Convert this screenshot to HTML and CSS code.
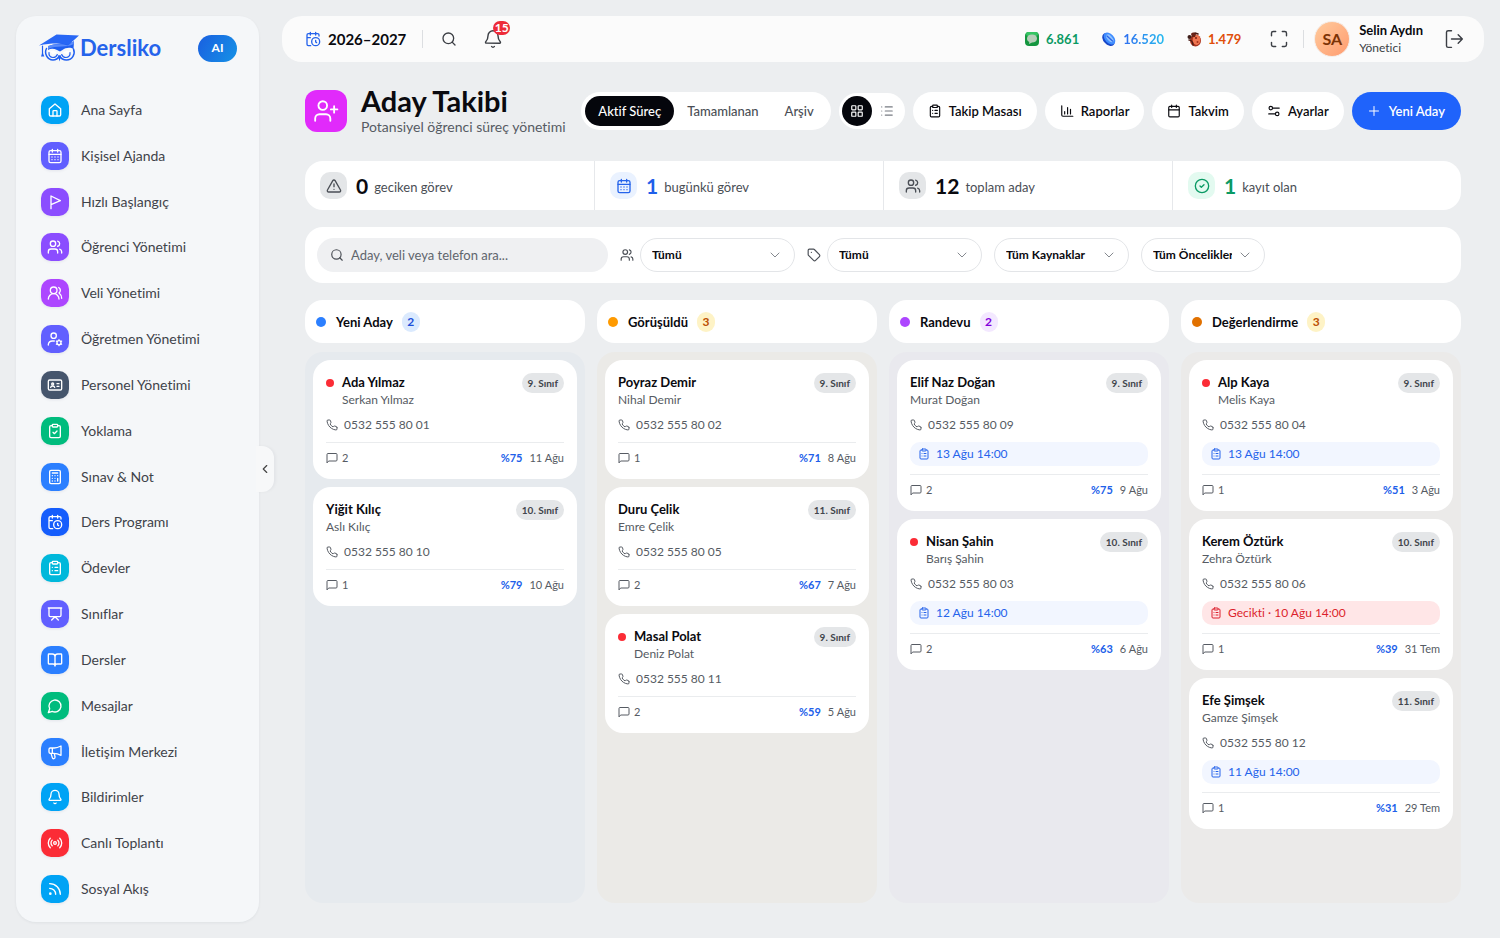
FILE: index.html
```html
<!DOCTYPE html>
<html lang="tr">
<head>
<meta charset="utf-8">
<meta name="viewport" content="width=device-width, initial-scale=1">
<title>Aday Takibi - Dersliko</title>
<link rel="stylesheet" href="styles.css">
</head>
<body>
<svg class="sprite" aria-hidden="true">
  <symbol id="home" viewBox="0 0 24 24"><path d="M3.5 10.2 12 3l8.500 7.200V19a2 2 0 0 1-2 2h-13a2 2 0 0 1-2-2z"/><path d="M9 21v-7a1 1 0 0 1 1-1h4a1 1 0 0 1 1 1v7"/></symbol>
  <symbol id="calendar-days" viewBox="0 0 24 24"><rect x="3" y="4" width="18" height="18" rx="2.500"/><path d="M8 2v4M16 2v4M3 9.500h18M7.500 13.500h.01M12 13.500h.01M16.500 13.500h.01M7.500 17.500h.01M12 17.500h.01M16.500 17.500h.01"/></symbol>
  <symbol id="flag" viewBox="0 0 24 24"><path d="M6 22V3l14 7-14 6"/></symbol>
  <symbol id="users" viewBox="0 0 24 24"><circle cx="9" cy="7" r="4"/><path d="M2 21v-2a4 4 0 0 1 4-4h6a4 4 0 0 1 4 4v2M16 3.130a4 4 0 0 1 0 7.750M22 21v-2a4 4 0 0 0-3-3.870"/></symbol>
  <symbol id="users-round" viewBox="0 0 24 24"><path d="M18 21a8 8 0 0 0-16 0M22 20c0-3.370-2-6.500-4-8a5 5 0 0 0-.45-8.300"/><circle cx="10" cy="8" r="5"/></symbol>
  <symbol id="user-cog" viewBox="0 0 24 24"><circle cx="10" cy="7" r="4"/><path d="M2 21v-1a6 6 0 0 1 6-5h3M18 13v1.200M18 20.800V22M14.100 15.200l1 .6M20.900 19.200l1 .6M14.100 19.800l1-.6M20.900 15.800l1-.6"/><circle cx="18" cy="17.500" r="3"/></symbol>
  <symbol id="id-card" viewBox="0 0 24 24"><rect x="2" y="4.500" width="20" height="15" rx="2"/><circle cx="8.500" cy="10.500" r="1.500"/><path d="M5.500 15.500c.6-2.600 5.400-2.600 6 0M15 10h3M15 14h3"/></symbol>
  <symbol id="clip-check" viewBox="0 0 24 24"><rect x="8" y="2" width="8" height="4" rx="1"/><path d="M16 4h2a2 2 0 0 1 2 2v14a2 2 0 0 1-2 2H6a2 2 0 0 1-2-2V6a2 2 0 0 1 2-2h2M9 14l2 2 4-4"/></symbol>
  <symbol id="clip-list" viewBox="0 0 24 24"><rect x="8" y="2" width="8" height="4" rx="1"/><path d="M16 4h2a2 2 0 0 1 2 2v14a2 2 0 0 1-2 2H6a2 2 0 0 1-2-2V6a2 2 0 0 1 2-2h2M12 11h4M12 16h4M8 11h.01M8 16h.01"/></symbol>
  <symbol id="calculator" viewBox="0 0 24 24"><rect x="4" y="2" width="16" height="20" rx="2"/><path d="M8 6h8M16 14v4M16 10h.01M12 10h.01M8 10h.01M12 14h.01M8 14h.01M12 18h.01M8 18h.01"/></symbol>
  <symbol id="cal-clock" viewBox="0 0 24 24"><path d="M21 7.500V6a2 2 0 0 0-2-2H5a2 2 0 0 0-2 2v14a2 2 0 0 0 2 2h3.500M16 2v4M8 2v4M3 10h5M17.500 17.500 16 16.300V14"/><circle cx="16" cy="16" r="6"/></symbol>
  <symbol id="presentation" viewBox="0 0 24 24"><path d="M2 3h20M21 3v11a2 2 0 0 1-2 2H5a2 2 0 0 1-2-2V3M7 21l5-5 5 5"/></symbol>
  <symbol id="book" viewBox="0 0 24 24"><path d="M12 7v14M3 18a1 1 0 0 1-1-1V4a1 1 0 0 1 1-1h5a4 4 0 0 1 4 4 4 4 0 0 1 4-4h5a1 1 0 0 1 1 1v13a1 1 0 0 1-1 1h-6a3 3 0 0 0-3 3 3 3 0 0 0-3-3z"/></symbol>
  <symbol id="bubble" viewBox="0 0 24 24"><path d="M7.900 20A9 9 0 1 0 4 16.100L2 22z"/></symbol>
  <symbol id="megaphone" viewBox="0 0 24 24"><path d="M8 6h3c4 0 7-1.500 10-3v14c-3-1.500-6-3-10-3H5a2 2 0 0 1-2-2V8a2 2 0 0 1 2-2h3v8M6 14l2 6.500a1.700 1.700 0 0 0 4-1L11 14M21 8v4"/></symbol>
  <symbol id="bell" viewBox="0 0 24 24"><path d="M10.300 21a2 2 0 0 0 3.400 0M3.300 15.300A1 1 0 0 0 4 17h16a1 1 0 0 0 .7-1.700C19.400 14 18 12.500 18 8A6 6 0 0 0 6 8c0 4.500-1.400 6-2.700 7.300"/></symbol>
  <symbol id="live" viewBox="0 0 24 24"><circle cx="12" cy="12" r="2"/><path d="M4.900 19.100a10 10 0 0 1 0-14.200M7.800 16.200a6 6 0 0 1 0-8.500M16.200 7.800a6 6 0 0 1 0 8.500M19.100 4.900a10 10 0 0 1 0 14.200"/></symbol>
  <symbol id="rss" viewBox="0 0 24 24"><path d="M4 11a9 9 0 0 1 9 9M4 4a16 16 0 0 1 16 16"/><circle cx="5" cy="19" r="1"/></symbol>
  <symbol id="chev-left" viewBox="0 0 24 24"><path d="m15 18-6-6 6-6"/></symbol>
  <symbol id="chev-down" viewBox="0 0 24 24"><path d="m4 8 8 8 8-8"/></symbol>
  <symbol id="search" viewBox="0 0 24 24"><circle cx="11" cy="11" r="8"/><path d="m21 21-4.300-4.300"/></symbol>
  <symbol id="expand" viewBox="0 0 24 24"><path d="M8 3H5a2 2 0 0 0-2 2v3M21 8V5a2 2 0 0 0-2-2h-3M3 16v3a2 2 0 0 0 2 2h3M16 21h3a2 2 0 0 0 2-2v-3"/></symbol>
  <symbol id="logout" viewBox="0 0 24 24"><path d="M9 22H5a2 2 0 0 1-2-2V4a2 2 0 0 1 2-2h4M17 17l5-5-5-5M22 12H9"/></symbol>
  <symbol id="user-plus" viewBox="0 0 24 24"><circle cx="9" cy="7" r="4"/><path d="M2 21v-2a4 4 0 0 1 4-4h6a4 4 0 0 1 4 4v2M19.500 7.500v6M16.500 10.500h6"/></symbol>
  <symbol id="grid" viewBox="0 0 24 24"><rect x="3" y="3" width="7" height="7" rx="1"/><rect x="14" y="3" width="7" height="7" rx="1"/><rect x="3" y="14" width="7" height="7" rx="1"/><rect x="14" y="14" width="7" height="7" rx="1"/></symbol>
  <symbol id="list" viewBox="0 0 24 24"><path d="M9 5h12M9 12h12M9 19h12M3 5h.01M3 12h.01M3 19h.01"/></symbol>
  <symbol id="chart" viewBox="0 0 24 24"><path d="M3 3v16a2 2 0 0 0 2 2h17M8 17v-4M13 17V6M18 17V9"/></symbol>
  <symbol id="calendar" viewBox="0 0 24 24"><rect x="3" y="4" width="18" height="18" rx="2"/><path d="M8 2v4M16 2v4M3 10h18"/></symbol>
  <symbol id="sliders" viewBox="0 0 24 24"><path d="M10 7h11M3 17h11"/><circle cx="6.500" cy="7" r="3"/><circle cx="17.500" cy="17" r="3"/></symbol>
  <symbol id="plus" viewBox="0 0 24 24"><path d="M3 12h18M12 3v18"/></symbol>
  <symbol id="alert" viewBox="0 0 24 24"><path d="m21.700 18-8-14a2 2 0 0 0-3.500 0l-8 14A2 2 0 0 0 4 21h16a2 2 0 0 0 1.700-3M12 9v4M12 17h.01"/></symbol>
  <symbol id="check" viewBox="0 0 24 24"><circle cx="12" cy="12" r="10"/><path d="m9 12 2 2 4-4"/></symbol>
  <symbol id="tag" viewBox="0 0 24 24"><path d="M12.600 2.600A2 2 0 0 0 11.200 2H4a2 2 0 0 0-2 2v7.200a2 2 0 0 0 .6 1.400l8.700 8.700a2.400 2.400 0 0 0 3.400 0l6.600-6.600a2.400 2.400 0 0 0 0-3.400zM7.500 7.500h.01"/></symbol>
  <symbol id="phone" viewBox="0 0 24 24"><path d="M22 16.900v3a2 2 0 0 1-2.200 2 19.800 19.800 0 0 1-8.600-3 19.500 19.500 0 0 1-6-6 19.800 19.800 0 0 1-3.100-8.700A2 2 0 0 1 4.100 2h3a2 2 0 0 1 2 1.700c.1 1 .4 1.900.7 2.800a2 2 0 0 1-.5 2.100L8.100 9.900a16 16 0 0 0 6 6l1.300-1.300a2 2 0 0 1 2.100-.4c.9.3 1.800.6 2.800.7a2 2 0 0 1 1.700 2"/></symbol>
  <symbol id="note" viewBox="0 0 24 24"><path d="M2 21V5a2 2 0 0 1 2-2h16a2 2 0 0 1 2 2v11a2 2 0 0 1-2 2H6z"/></symbol>
</svg>

<div class="app">
  <aside class="sidebar">
    <div class="brand">
      <a class="logo" href="#">
        <svg class="logo-mark" viewBox="0 0 40 28" aria-hidden="true">
          <g fill="none" stroke="#1f5ff0" stroke-width="1.500">
            <path d="M7.500 14.500C5 19 8 26 14 26c3 0 5-1.500 6.500-4 1.500 2.500 4 4 7 4 6 0 9-6 7-11"/>
            <path d="M10 18.500c-.5 3 1.500 5 4 5 2 0 3.600-1.200 4.300-3M31 18.500c.5 3-1.500 5-4 5-2 0-3.600-1.200-4.300-3" stroke-width="1.200"/>
            <path d="M3.500 12v8" stroke-width="1.200"/>
          </g>
          <path fill="#1f5ff0" d="M9 12.500c5-3 19-4 26-4.500l-.5 7c-3-2-8-1.500-11 1l-2.500 1.500-3-1.500c-3-1.500-6-2-9 0z"/>
          <path fill="#fff" opacity=".9" d="M11 17.500c2-1 5-1 7 1l-4 2zM31 17.500c-2-1-5-1-7 1l4 2z"/>
          <path fill="#1f5ff0" d="m18.700 21 1.800 6.500 1.800-6.500-1.800 1z"/>
          <path fill="#2867f5" d="M0 11.500 17.500.4 40 1.500 29.500 11C22 9 12 9 0 11.500z"/>
          <path fill="#5b8cfa" d="M9 12c5-2 14-2.500 20-.5l6-5-.3 3.500C28 14 17 11 9 15z"/>
          <path fill="#1f5ff0" d="m3.500 18 1.800 4.500H2z"/>
        </svg>
        <span>Dersliko</span>
      </a>
      <button class="ai" type="button">AI</button>
    </div>
    <nav class="nav" aria-label="Ana menü">
      <a href="#"><span class="tile sky"><svg class="i16"><use href="#home"/></svg></span>Ana Sayfa</a>
      <a href="#"><span class="tile indigo"><svg class="i16"><use href="#calendar-days"/></svg></span>Kişisel Ajanda</a>
      <a href="#"><span class="tile violet"><svg class="i16"><use href="#flag"/></svg></span>Hızlı Başlangıç</a>
      <a href="#"><span class="tile violet"><svg class="i16"><use href="#users"/></svg></span>Öğrenci Yönetimi</a>
      <a href="#"><span class="tile purple"><svg class="i16"><use href="#users-round"/></svg></span>Veli Yönetimi</a>
      <a href="#"><span class="tile indigo"><svg class="i16"><use href="#user-cog"/></svg></span>Öğretmen Yönetimi</a>
      <a href="#"><span class="tile slate"><svg class="i16"><use href="#id-card"/></svg></span>Personel Yönetimi</a>
      <a href="#"><span class="tile green"><svg class="i16"><use href="#clip-check"/></svg></span>Yoklama</a>
      <a href="#"><span class="tile blue"><svg class="i16"><use href="#calculator"/></svg></span>Sınav &amp; Not</a>
      <a href="#"><span class="tile royal"><svg class="i16"><use href="#cal-clock"/></svg></span>Ders Programı</a>
      <a href="#"><span class="tile cyan"><svg class="i16"><use href="#clip-list"/></svg></span>Ödevler</a>
      <a href="#"><span class="tile indigo"><svg class="i16"><use href="#presentation"/></svg></span>Sınıflar</a>
      <a href="#"><span class="tile blue"><svg class="i16"><use href="#book"/></svg></span>Dersler</a>
      <a href="#"><span class="tile green"><svg class="i16"><use href="#bubble"/></svg></span>Mesajlar</a>
      <a href="#"><span class="tile blue"><svg class="i16"><use href="#megaphone"/></svg></span>İletişim Merkezi</a>
      <a href="#"><span class="tile sky"><svg class="i16"><use href="#bell"/></svg></span>Bildirimler</a>
      <a href="#"><span class="tile red"><svg class="i16"><use href="#live"/></svg></span>Canlı Toplantı</a>
      <a href="#"><span class="tile sky"><svg class="i16"><use href="#rss"/></svg></span>Sosyal Akış</a>
    </nav>
    <button class="collapse" type="button" aria-label="Menüyü daralt"><svg class="i14"><use href="#chev-left"/></svg></button>
  </aside>

  <div class="content">
    <header class="topbar">
      <button class="year" type="button"><svg class="i16"><use href="#cal-clock"/></svg>2026–2027</button>
      <span class="rule"></span>
      <button class="icon-btn" type="button" aria-label="Ara"><svg class="i16"><use href="#search"/></svg></button>
      <button class="icon-btn bell" type="button" aria-label="Bildirimler"><svg class="i20"><use href="#bell"/></svg><span class="badge">15</span></button>
      <div class="credits">
        <span class="credit c-green"><svg viewBox="0 0 16 16" class="coin"><rect x="1" y="1" width="14" height="14" rx="4" fill="#14963f"/><rect x="2" y="1" width="12" height="4" rx="2" fill="#35c463"/><path d="M8 3.500c3 0 5 1.500 5 4s-2 4-5 4l-3 1.500.3-2C3.500 10.300 3 9 3 7.500c0-2.500 2-4 5-4z" fill="#b5cdb8"/></svg><span>6.861</span></span>
        <span class="credit c-blue"><svg viewBox="0 0 16 16" class="coin"><ellipse cx="7.500" cy="8.500" rx="5" ry="7.500" transform="rotate(-42 7.500 8.500)" fill="#1646c8"/><ellipse cx="8.500" cy="7.500" rx="4.500" ry="7" transform="rotate(-42 8.500 7.500)" fill="#3f8cff"/><ellipse cx="8.800" cy="7.300" rx="2.500" ry="4.700" transform="rotate(-42 8.800 7.300)" fill="#8fc4ff"/><path d="m6 5 5.500 5" stroke="#2b62e8" stroke-width="1.200"/></svg><span>16.520</span></span>
        <span class="credit c-orange"><svg viewBox="0 0 16 16" class="coin"><ellipse cx="9.500" cy="9.500" rx="5.500" ry="6" fill="#a8321d"/><ellipse cx="10.500" cy="9" rx="3.800" ry="5" fill="#ef7550"/><path d="M5 3c1-2 4-2 5 0l-1 3H6z" fill="#6b2418"/><circle cx="3.500" cy="6" r="2" fill="#3d1d19"/><path d="M3 9c2 0 4 2 4 5M9 2l3 1" stroke="#4b1b14" stroke-width="1.500" fill="none"/><circle cx="10" cy="7" r="1" fill="#7a1f15"/><circle cx="11.500" cy="11" r="1" fill="#a8321d"/></svg><span>1.479</span></span>
      </div>
      <button class="icon-btn full" type="button" aria-label="Tam ekran"><svg class="i20"><use href="#expand"/></svg></button>
      <span class="rule"></span>
      <div class="profile">
        <span class="avatar">SA</span>
        <div class="who"><strong>Selin Aydın</strong><span>Yönetici</span></div>
      </div>
      <button class="icon-btn" type="button" aria-label="Çıkış"><svg class="i20"><use href="#logout"/></svg></button>
    </header>

    <main class="main">
      <div class="page-head">
        <span class="page-icon"><svg class="i26"><use href="#user-plus"/></svg></span>
        <div class="page-title"><h1>Aday Takibi</h1><p>Potansiyel öğrenci süreç yönetimi</p></div>
        <div class="actions">
          <div class="tabs">
            <button class="tab active" type="button">Aktif Süreç</button>
            <button class="tab" type="button">Tamamlanan</button>
            <button class="tab" type="button">Arşiv</button>
          </div>
          <div class="view">
            <button class="active" type="button" aria-label="Pano"><svg class="i14"><use href="#grid"/></svg></button>
            <button type="button" aria-label="Liste"><svg class="i14"><use href="#list"/></svg></button>
          </div>
          <button class="btn" type="button"><svg class="i14"><use href="#clip-list"/></svg>Takip Masası</button>
          <button class="btn" type="button"><svg class="i14"><use href="#chart"/></svg>Raporlar</button>
          <button class="btn" type="button"><svg class="i14"><use href="#calendar"/></svg>Takvim</button>
          <button class="btn" type="button"><svg class="i14"><use href="#sliders"/></svg>Ayarlar</button>
          <button class="btn primary" type="button"><svg class="i12"><use href="#plus"/></svg>Yeni Aday</button>
        </div>
      </div>

      <section class="stats">
        <div class="stat"><span class="stat-icon"><svg class="i16"><use href="#alert"/></svg></span><strong>0</strong><span>geciken görev</span></div>
        <div class="stat s-blue"><span class="stat-icon"><svg class="i16"><use href="#calendar-days"/></svg></span><strong>1</strong><span>bugünkü görev</span></div>
        <div class="stat"><span class="stat-icon"><svg class="i16"><use href="#users"/></svg></span><strong>12</strong><span>toplam aday</span></div>
        <div class="stat s-green"><span class="stat-icon"><svg class="i16"><use href="#check"/></svg></span><strong>1</strong><span>kayıt olan</span></div>
      </section>

      <section class="filters">
        <label class="search"><svg class="i14"><use href="#search"/></svg><input type="search" aria-label="Aday ara" placeholder="Aday, veli veya telefon ara..."></label>
        <div class="filter"><svg class="i14"><use href="#users"/></svg><span class="pick wide"><select aria-label="Sorumlu"><option>Tümü</option></select><svg class="i12"><use href="#chev-down"/></svg></span></div>
        <div class="filter"><svg class="i14"><use href="#tag"/></svg><span class="pick wide"><select aria-label="Etiket"><option>Tümü</option></select><svg class="i12"><use href="#chev-down"/></svg></span></div>
        <span class="pick source"><select aria-label="Kaynak"><option>Tüm Kaynaklar</option></select><svg class="i12"><use href="#chev-down"/></svg></span>
        <span class="pick priority"><select aria-label="Öncelik"><option>Tüm Öncelikler</option></select><svg class="i12"><use href="#chev-down"/></svg></span>
      </section>

      <section class="board">
        <div class="column k-blue">
          <header class="col-head"><i class="dot"></i><h2>Yeni Aday</h2><span class="count">2</span></header>
          <div class="col-body">
            <article class="card">
              <div class="card-top"><i class="dot urgent"></i><div class="names"><h3>Ada Yılmaz</h3><p>Serkan Yılmaz</p></div><span class="grade">9. Sınıf</span></div>
              <div class="tel"><svg class="i12"><use href="#phone"/></svg>0532 555 80 01</div>
              <footer><svg class="i12"><use href="#note"/></svg><span>2</span><b>%75</b><time>11 Ağu</time></footer>
            </article>
            <article class="card">
              <div class="card-top"><div class="names"><h3>Yiğit Kılıç</h3><p>Aslı Kılıç</p></div><span class="grade">10. Sınıf</span></div>
              <div class="tel"><svg class="i12"><use href="#phone"/></svg>0532 555 80 10</div>
              <footer><svg class="i12"><use href="#note"/></svg><span>1</span><b>%79</b><time>10 Ağu</time></footer>
            </article>
          </div>
        </div>

        <div class="column k-amber">
          <header class="col-head"><i class="dot"></i><h2>Görüşüldü</h2><span class="count">3</span></header>
          <div class="col-body">
            <article class="card">
              <div class="card-top"><div class="names"><h3>Poyraz Demir</h3><p>Nihal Demir</p></div><span class="grade">9. Sınıf</span></div>
              <div class="tel"><svg class="i12"><use href="#phone"/></svg>0532 555 80 02</div>
              <footer><svg class="i12"><use href="#note"/></svg><span>1</span><b>%71</b><time>8 Ağu</time></footer>
            </article>
            <article class="card">
              <div class="card-top"><div class="names"><h3>Duru Çelik</h3><p>Emre Çelik</p></div><span class="grade">11. Sınıf</span></div>
              <div class="tel"><svg class="i12"><use href="#phone"/></svg>0532 555 80 05</div>
              <footer><svg class="i12"><use href="#note"/></svg><span>2</span><b>%67</b><time>7 Ağu</time></footer>
            </article>
            <article class="card">
              <div class="card-top"><i class="dot urgent"></i><div class="names"><h3>Masal Polat</h3><p>Deniz Polat</p></div><span class="grade">9. Sınıf</span></div>
              <div class="tel"><svg class="i12"><use href="#phone"/></svg>0532 555 80 11</div>
              <footer><svg class="i12"><use href="#note"/></svg><span>2</span><b>%59</b><time>5 Ağu</time></footer>
            </article>
          </div>
        </div>

        <div class="column k-purple">
          <header class="col-head"><i class="dot"></i><h2>Randevu</h2><span class="count">2</span></header>
          <div class="col-body">
            <article class="card">
              <div class="card-top"><div class="names"><h3>Elif Naz Doğan</h3><p>Murat Doğan</p></div><span class="grade">9. Sınıf</span></div>
              <div class="tel"><svg class="i12"><use href="#phone"/></svg>0532 555 80 09</div>
              <div class="task"><svg class="i12"><use href="#clip-list"/></svg>13 Ağu 14:00</div>
              <footer><svg class="i12"><use href="#note"/></svg><span>2</span><b>%75</b><time>9 Ağu</time></footer>
            </article>
            <article class="card">
              <div class="card-top"><i class="dot urgent"></i><div class="names"><h3>Nisan Şahin</h3><p>Barış Şahin</p></div><span class="grade">10. Sınıf</span></div>
              <div class="tel"><svg class="i12"><use href="#phone"/></svg>0532 555 80 03</div>
              <div class="task"><svg class="i12"><use href="#clip-list"/></svg>12 Ağu 14:00</div>
              <footer><svg class="i12"><use href="#note"/></svg><span>2</span><b>%63</b><time>6 Ağu</time></footer>
            </article>
          </div>
        </div>

        <div class="column k-orange">
          <header class="col-head"><i class="dot"></i><h2>Değerlendirme</h2><span class="count">3</span></header>
          <div class="col-body">
            <article class="card">
              <div class="card-top"><i class="dot urgent"></i><div class="names"><h3>Alp Kaya</h3><p>Melis Kaya</p></div><span class="grade">9. Sınıf</span></div>
              <div class="tel"><svg class="i12"><use href="#phone"/></svg>0532 555 80 04</div>
              <div class="task"><svg class="i12"><use href="#clip-list"/></svg>13 Ağu 14:00</div>
              <footer><svg class="i12"><use href="#note"/></svg><span>1</span><b>%51</b><time>3 Ağu</time></footer>
            </article>
            <article class="card">
              <div class="card-top"><div class="names"><h3>Kerem Öztürk</h3><p>Zehra Öztürk</p></div><span class="grade">10. Sınıf</span></div>
              <div class="tel"><svg class="i12"><use href="#phone"/></svg>0532 555 80 06</div>
              <div class="task late"><svg class="i12"><use href="#clip-list"/></svg>Gecikti · 10 Ağu 14:00</div>
              <footer><svg class="i12"><use href="#note"/></svg><span>1</span><b>%39</b><time>31 Tem</time></footer>
            </article>
            <article class="card">
              <div class="card-top"><div class="names"><h3>Efe Şimşek</h3><p>Gamze Şimşek</p></div><span class="grade">11. Sınıf</span></div>
              <div class="tel"><svg class="i12"><use href="#phone"/></svg>0532 555 80 12</div>
              <div class="task"><svg class="i12"><use href="#clip-list"/></svg>11 Ağu 14:00</div>
              <footer><svg class="i12"><use href="#note"/></svg><span>1</span><b>%31</b><time>29 Tem</time></footer>
            </article>
          </div>
        </div>
      </section>
    </main>
  </div>
</div>
</body>
</html>
```
FILE: styles.css
```css
* { box-sizing: border-box; margin: 0; }

body {
  background: #eceef0;
  color: #0a0a0f;
  font-family: Lato, "Open Sans", sans-serif;
  font-size: 14px;
  font-variant-ligatures: none;
  line-height: 20px;
}

button, input, select { font: inherit; font-variant-ligatures: none; color: inherit; border: 0; background: none; padding: 0; }
button { cursor: pointer; }
a { color: inherit; text-decoration: none; }

.sprite { display: none; }
svg { flex: none; fill: none; stroke: currentColor; stroke-width: 2; stroke-linecap: round; stroke-linejoin: round; }
.i12 { width: 12px; height: 12px; }
.i14 { width: 14px; height: 14px; }
.i16 { width: 16px; height: 16px; }
.i20 { width: 20px; height: 20px; stroke-width: 1.700; }
.i26 { width: 26px; height: 26px; stroke-width: 1.700; }

.app { display: flex; gap: 23px; min-height: 100vh; padding: 16px; }

/* Sidebar */
.sidebar {
  position: relative;
  flex: none;
  width: 243px;
  display: flex;
  flex-direction: column;
  gap: 24px;
  padding: 17px 22px 10px 23px;
  border-radius: 20px;
  background: #f5f7f9;
  box-shadow: 0 1px 3px rgba(20, 30, 50, .06);
}
.brand { display: flex; align-items: center; justify-content: space-between; height: 30px; }
.logo { display: flex; align-items: center; gap: 1px; color: #2563eb; font-size: 22px; font-weight: 700; }
.logo-mark { width: 40px; height: 28px; stroke: none; }
.ai {
  width: 39px;
  height: 27px;
  border-radius: 14px;
  background: linear-gradient(120deg, #1a5fe0, #1592e6);
  color: #fff;
  font-size: 12px;
  font-weight: 700;
}
.nav { flex: 1; display: flex; flex-direction: column; }
.nav a { flex: 1; display: flex; align-items: center; gap: 12px; padding-left: 2px; color: #3f434a; }
.tile { display: grid; place-items: center; width: 28px; height: 28px; border-radius: 10px; color: #fff; box-shadow: 0 1px 3px rgba(20, 30, 80, .08); }
.sky { background: #00a3f5; }
.indigo { background: #615fff; }
.violet { background: #8b4dff; }
.purple { background: #ad46ff; }
.slate { background: #45556c; }
.green { background: #00bc7d; }
.blue { background: #2b7fff; }
.royal { background: #155dfc; }
.cyan { background: #00b8db; }
.red { background: #fb2c36; }
.collapse {
  position: absolute;
  right: -15px;
  top: 50%;
  width: 18px;
  height: 46px;
  margin-top: -23px;
  display: grid;
  place-items: center;
  border-radius: 0 12px 12px 0;
  background: #f7f8f9;
  color: #444;
  box-shadow: 2px 0 3px rgba(20, 30, 50, .04);
}

/* Top bar */
.content { flex: 1; min-width: 0; display: flex; flex-direction: column; }
.topbar {
  display: flex;
  align-items: center;
  height: 46px;
  padding: 0 20px 0 23px;
  border-radius: 20px;
  background: #fbfbfb;
  color: #3b3e44;
}
.year { display: flex; align-items: center; gap: 7px; color: #0a0a0f; font-size: 15px; font-weight: 700; }
.year svg { color: #2563eb; }
.rule { width: 1px; height: 18px; margin: 0 18px 0 16px; background: #dcdee1; }
.icon-btn { display: grid; place-items: center; }
.bell { position: relative; margin-left: 26px; }
.badge {
  position: absolute;
  left: 10px;
  top: -8px;
  min-width: 17px;
  height: 14px;
  border-radius: 7px;
  background: #ed2b38;
  color: #fff;
  font-size: 12px;
  font-weight: 700;
  line-height: 14px;
}
.credits { display: flex; gap: 22px; margin-left: auto; margin-right: 28px; font-size: 13px; font-weight: 700; }
.credit { display: flex; align-items: center; gap: 6px; }
.coin { width: 16px; height: 16px; stroke: none; }
.c-green { color: #0b9a63; }
.c-blue span { background: linear-gradient(90deg, #2f6df0, #25b9ee); background-clip: text; color: transparent; }
.c-orange { color: #e04e0a; }
.full + .rule { margin: 0 10px 0 14px; }
.profile { display: flex; align-items: center; gap: 9px; margin-right: 21px; }
.avatar {
  display: grid;
  place-items: center;
  width: 36px;
  height: 36px;
  border: 1px solid #f5ede8;
  border-radius: 50%;
  background: linear-gradient(135deg, #ffcb9d, #ff9c70);
  color: #7b3306;
  font-size: 16px;
  font-weight: 700;
}
.who { display: flex; flex-direction: column; line-height: 17px; }
.who strong { color: #0a0a0f; font-size: 13px; }
.who span { font-size: 12px; }

/* Page heading */
.main { flex: 1; display: flex; flex-direction: column; padding: 22px 23px 19px; }
.page-head { display: flex; align-items: center; gap: 14px; height: 54px; }
.page-icon { display: grid; place-items: center; flex: none; width: 42px; height: 42px; border-radius: 12px; background: #e12afb; color: #fff; }
.page-title { white-space: nowrap; }
.page-title h1 { font-size: 29px; line-height: 32px; font-weight: 700; }
.page-title p { color: #565b63; line-height: 20px; }
.actions { display: flex; align-items: center; gap: 8px; margin-left: auto; font-size: 13px; }
.tabs { display: flex; padding: 4px; border-radius: 19px; background: #fff; }
.tab { height: 30px; padding: 0 13px; border-radius: 15px; color: #4a4e55; font-weight: 500; white-space: nowrap; }
.tab.active { background: #05060c; color: #fff; }
.view { display: flex; padding: 3px; border-radius: 18px; background: #fff; }
.view button { display: grid; place-items: center; width: 30px; height: 30px; border-radius: 50%; color: #777b82; }
.view .active { background: #05060c; color: #fff; }
.btn { display: flex; align-items: center; gap: 7px; height: 38px; padding: 0 15px; border-radius: 19px; background: #fff; font-weight: 600; white-space: nowrap; }
.btn.primary { gap: 9px; padding: 0 16px; background: #1f63fb; color: #fff; }

/* Summary strip */
.stats { display: grid; grid-template-columns: repeat(4, 1fr); margin-top: 23px; border-radius: 18px; background: #fff; }
.stat { display: flex; align-items: center; height: 49px; padding: 0 15px; border-left: 1px solid #e6e8eb; color: #4a4e55; }
.stat:first-child { border-left: 0; }
.stat-icon { display: grid; place-items: center; width: 27px; height: 27px; margin-right: 9px; border-radius: 10px; background: #e4e6e8; }
.stat strong { margin-right: 6px; color: #0a0a0f; font-size: 21px; font-weight: 700; }
.stat > span:last-child { font-size: 13px; padding-top: 3px; }
.s-blue .stat-icon { background: #eaf2ff; color: #2563eb; }
.s-blue strong { color: #1f5fea; }
.s-green .stat-icon { background: #e3faf0; color: #0a9a64; }
.s-green strong { color: #0a9a64; }

/* Filters */
.filters { display: flex; align-items: center; gap: 12px; height: 56px; margin-top: 17px; padding: 0 12px; border-radius: 18px; background: #fff; }
.search { display: flex; align-items: center; gap: 7px; width: 291px; height: 34px; padding: 0 13px; border-radius: 17px; background: #eff0f2; color: #4a4e55; font-size: 13px; }
.search input { flex: 1; min-width: 0; outline: 0; }
.search input::placeholder { color: #60656d; opacity: 1; }
.filter { display: flex; align-items: center; gap: 6px; color: #4a4e55; }
.pick { display: grid; align-items: center; height: 34px; border: 1px solid #e3e5e8; border-radius: 17px; color: #0a0a0f; font-size: 12px; font-weight: 700; }
.pick > * { grid-area: 1 / 1; }
.pick select { width: 100%; height: 32px; padding: 0 32px 0 11px; appearance: none; }
.pick svg { justify-self: end; margin-right: 13px; color: #85898f; pointer-events: none; }
.wide { width: 155px; }
.source { width: 135px; }
.priority { width: 124px; }

/* Board */
.board { flex: 1; display: grid; grid-template-columns: repeat(4, 1fr); gap: 12px; margin-top: 17px; }
.column { display: flex; flex-direction: column; gap: 9px; min-width: 0; }
.col-head { display: flex; align-items: center; height: 43px; padding: 0 11px; border-radius: 18px; background: #fff; }
.col-head h2 { margin: 0 9px 0 10px; font-size: 13px; line-height: 20px; font-weight: 700; }
.dot { flex: none; width: 10px; height: 10px; border-radius: 50%; background: var(--dot); }
.count { width: 18px; height: 20px; border-radius: 9px; background: var(--soft); color: var(--ink); font-size: 12px; font-weight: 700; text-align: center; }
.col-body { flex: 1; display: flex; flex-direction: column; gap: 8px; padding: 8px; border-radius: 18px; background: var(--tint); }
.k-blue { --dot: #2b7fff; --soft: #dbeafe; --ink: #1d4ed8; --tint: #e6eaee; }
.k-amber { --dot: #fe9a00; --soft: #fef3c6; --ink: #bb4d00; --tint: #ebeae7; }
.k-purple { --dot: #ad46ff; --soft: #f3e8ff; --ink: #8200db; --tint: #e9e9ee; }
.k-orange { --dot: #e17100; --soft: #fef3c6; --ink: #bb4d00; --tint: #ebeae9; }

.card { padding: 12px 13px 13px; border-radius: 18px; background: #fff; color: #565b63; }
.card-top { display: flex; align-items: flex-start; }
.names { flex: 1; min-width: 0; }
.names h3 { color: #0a0a0f; font-size: 13px; font-weight: 700; line-height: 20px; }
.names p { font-size: 12px; line-height: 16px; }
.urgent { width: 8px; height: 8px; margin: 7px 8px 0 0; background: #fb2c36; }
.grade { height: 20px; margin-top: 1px; padding: 0 6px; border-radius: 10px; background: #e4e6e8; color: #41454c; font-size: 10px; font-weight: 700; }
.tel { display: flex; align-items: center; gap: 6px; height: 18px; margin-top: 8px; font-size: 12px; }
.task { display: flex; align-items: center; gap: 6px; height: 24px; margin-top: 8px; padding: 0 8px; border-radius: 10px; background: #f2f6ff; color: #2563eb; font-size: 12px; }
.task.late { background: #ffe6e7; color: #dc1f2c; }
.card footer { display: flex; align-items: center; margin-top: 8px; padding-top: 7px; border-top: 1px solid #eaecee; font-size: 11px; line-height: 16px; }
.card footer span { margin-left: 4px; }
.card footer b { margin-left: auto; color: #2060ea; }
.card footer time { margin-left: 7px; }
```
